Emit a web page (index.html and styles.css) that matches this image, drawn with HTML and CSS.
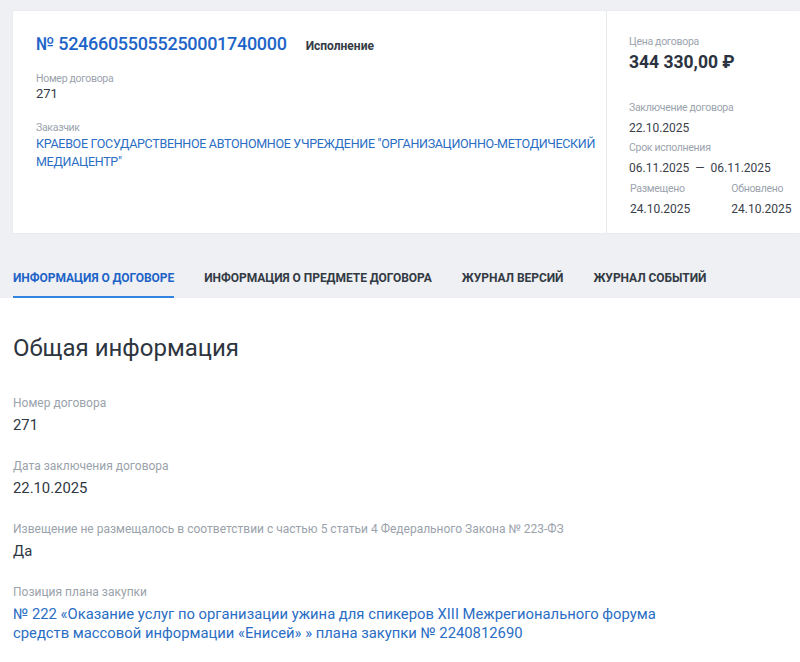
FILE: index.html
```html
<!DOCTYPE html>
<html lang="ru">
<head>
<meta charset="utf-8">
<link rel="stylesheet" href="styles.css">
</head>
<body>
<div class="top">
  <div class="card">
    <div class="card-main">
      <div class="title-row">
        <span class="reg-num">№ 52466055055250001740000</span>
        <span class="status">Исполнение</span>
      </div>
      <div class="field">
        <div class="lbl">Номер договора</div>
        <div class="val">271</div>
      </div>
      <div class="field">
        <div class="lbl">Заказчик</div>
        <div class="val link upper">КРАЕВОЕ ГОСУДАРСТВЕННОЕ АВТОНОМНОЕ УЧРЕЖДЕНИЕ "ОРГАНИЗАЦИОННО-МЕТОДИЧЕСКИЙ МЕДИАЦЕНТР"</div>
      </div>
    </div>
    <div class="card-side">
      <div class="slbl">Цена договора</div>
      <div class="price">344 330,00 ₽</div>
      <div class="side-block">
        <div class="slbl">Заключение договора</div>
        <div class="sval">22.10.2025</div>
        <div class="slbl">Срок исполнения</div>
        <div class="sval">06.11.2025 &nbsp;—&nbsp; 06.11.2025</div>
        <div class="pair">
          <div>
            <div class="slbl">Размещено</div>
            <div class="sval">24.10.2025</div>
          </div>
          <div>
            <div class="slbl">Обновлено</div>
            <div class="sval">24.10.2025</div>
          </div>
        </div>
      </div>
    </div>
  </div>
  <nav class="tabs">
    <a class="tab active">ИНФОРМАЦИЯ О ДОГОВОРЕ</a>
    <a class="tab">ИНФОРМАЦИЯ О ПРЕДМЕТЕ ДОГОВОРА</a>
    <a class="tab">ЖУРНАЛ ВЕРСИЙ</a>
    <a class="tab">ЖУРНАЛ СОБЫТИЙ</a>
  </nav>
</div>
<main class="content">
  <h1 class="heading">Общая информация</h1>
  <div class="item">
    <div class="ilbl">Номер договора</div>
    <div class="ival">271</div>
  </div>
  <div class="item">
    <div class="ilbl">Дата заключения договора</div>
    <div class="ival">22.10.2025</div>
  </div>
  <div class="item">
    <div class="ilbl">Извещение не размещалось в соответствии с частью 5 статьи 4 Федерального Закона № 223-ФЗ</div>
    <div class="ival">Да</div>
  </div>
  <div class="item">
    <div class="ilbl">Позиция плана закупки</div>
    <div class="ival link">№ 222 «Оказание услуг по организации ужина для спикеров XIII Межрегионального форума<br>средств массовой информации «Енисей» » плана закупки № 2240812690</div>
  </div>
</main>
</body>
</html>
```
FILE: styles.css
```css
* { box-sizing: border-box; }
html, body { margin: 0; padding: 0; }
body {
  font-family: Roboto, "Noto Sans", sans-serif;
  background: #ffffff;
  color: #343b45;
  width: 800px;
  overflow: hidden;
}
.top {
  background: #eef0f3;
  padding: 11px 0 0 13px;
}
.card {
  background: #fff;
  display: flex;
  height: 222px;
  box-shadow: 0 0 2px rgba(0,0,0,0.06);
}
.card-main {
  flex: 1;
  padding: 22px 8px 0 23px;
}
.title-row {
  display: flex;
  align-items: baseline;
  gap: 19px;
  margin-bottom: 18px;
}
.reg-num {
  font-size: 18px;
  font-weight: 500;
  color: #1e64c8;
  letter-spacing: -0.3px;
}
.status {
  font-size: 12px;
  font-weight: 700;
  color: #343b45;
}
.field { margin-bottom: 18px; }
.lbl, .slbl {
  font-size: 10.5px;
  letter-spacing: -0.3px;
  color: #9ba3ad;
  line-height: 14px;
}
.val {
  font-size: 13px;
  line-height: 18px;
  margin-top: -1px;
  color: #343b45;
}
.val.upper {
  font-size: 12.5px;
  letter-spacing: -0.3px;
  margin-top: 0;
}
.link { color: #2a6dc4; }
.card-side {
  width: 194px;
  border-left: 1px solid #e6e8eb;
  padding: 21px 0 0 22px;
}
.card-side .slbl { line-height: 20px; }
.price {
  font-size: 17.5px;
  font-weight: 700;
  color: #2b3340;
  line-height: 21px;
}
.side-block { margin-top: 25px; }
.sval {
  font-size: 12px;
  line-height: 20px;
  color: #3a414b;
}
.pair {
  display: flex;
  gap: 41px;
  padding-left: 1px;
  margin-top: 1px;
}
.tabs {
  display: flex;
  gap: 30px;
  padding-top: 37px;
  height: 65px;
}
.tab {
  font-size: 12px;
  font-weight: 700;
  color: #333a44;
  height: 28px;
  line-height: 16px;
  letter-spacing: -0.05px;
}
.tab.active {
  color: #1e64c8;
  border-bottom: 2px solid #3383e0;
}
.content {
  padding: 36px 13px 0;
}
.heading {
  font-size: 24px;
  font-weight: 400;
  color: #2d3540;
  margin: 0 0 33px;
  line-height: 28px;
}
.item { margin-bottom: 23px; }
.ilbl {
  font-size: 12px;
  color: #9aa2ab;
  line-height: 16px;
}
.ival {
  font-size: 14.8px;
  line-height: 19px;
  margin-top: 5px;
  color: #2f3742;
}
.ival.link { color: #2a6dc4; }
```
